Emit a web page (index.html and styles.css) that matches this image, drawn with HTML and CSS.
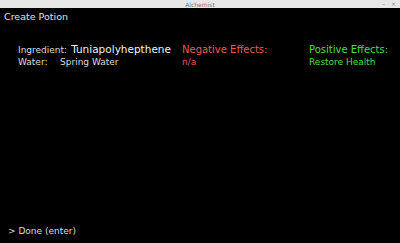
FILE: index.html
```html
<!DOCTYPE html>
<html lang="en">
<head>
    <meta charset="UTF-8">
    <title>Alchemist</title>
    <link rel="stylesheet" href="styles.css">
</head>
<body>
    <div class="window">
        <div class="titlebar">
            <span class="title">Alchemist</span>
            <span class="controls"><span>&ndash;</span><span>&times;</span></span>
        </div>
        <div class="screen">
            <h1>Create Potion</h1>
            <div class="details">
                <div class="cell"><span class="label">Ingredient:</span><span class="ingredient">Tuniapolyhepthene</span></div>
                <div class="cell head negative">Negative Effects:</div>
                <div class="cell head positive">Positive Effects:</div>
                <div class="cell"><span class="label water">Water:</span><span class="value">Spring Water</span></div>
                <div class="cell effect negative">n/a</div>
                <div class="cell effect positive">Restore Health</div>
            </div>
            <div class="prompt">&gt; Done (enter)</div>
        </div>
    </div>
</body>
</html>
```

FILE: styles.css
```css
body {
    margin: 0;
    background-color: #000;
    font-family: "DejaVu Sans", sans-serif;
}
.window {
    width: 400px;
    height: 243px;
    display: flex;
    flex-direction: column;
}
.titlebar {
    height: 8px;
    background-color: #e6e6e6;
    position: relative;
    display: flex;
    justify-content: center;
    align-items: center;
}
.title {
    font-size: 6px;
    color: #777;
}
.controls {
    position: absolute;
    right: 4px;
    top: 0;
    font-size: 6px;
    color: #888;
    display: flex;
    gap: 6px;
}
.screen {
    flex: 1;
    position: relative;
    color: #ddd;
}
h1 {
    font-size: 9.5px;
    font-weight: normal;
    line-height: 12px;
    margin: 3px 0 0 4px;
    color: #e0e0e0;
}
.details {
    display: grid;
    grid-template-columns: 164px 127px auto;
    grid-auto-rows: 14px;
    align-items: baseline;
    margin: 20px 0 0 18px;
    font-size: 9px;
}
.cell {
    display: flex;
    align-items: baseline;
    white-space: nowrap;
}
.label {
    margin-right: 4px;
}
.water {
    width: 38px;
}
.ingredient {
    font-size: 10.5px;
    color: #f2f2f2;
}
.value {
    color: #ddd;
}
.head {
    font-size: 10px;
}
.negative {
    color: #e85a5a;
}
.positive {
    color: #50dc50;
}
.prompt {
    position: absolute;
    left: 8px;
    bottom: 7px;
    font-size: 9px;
}
```
